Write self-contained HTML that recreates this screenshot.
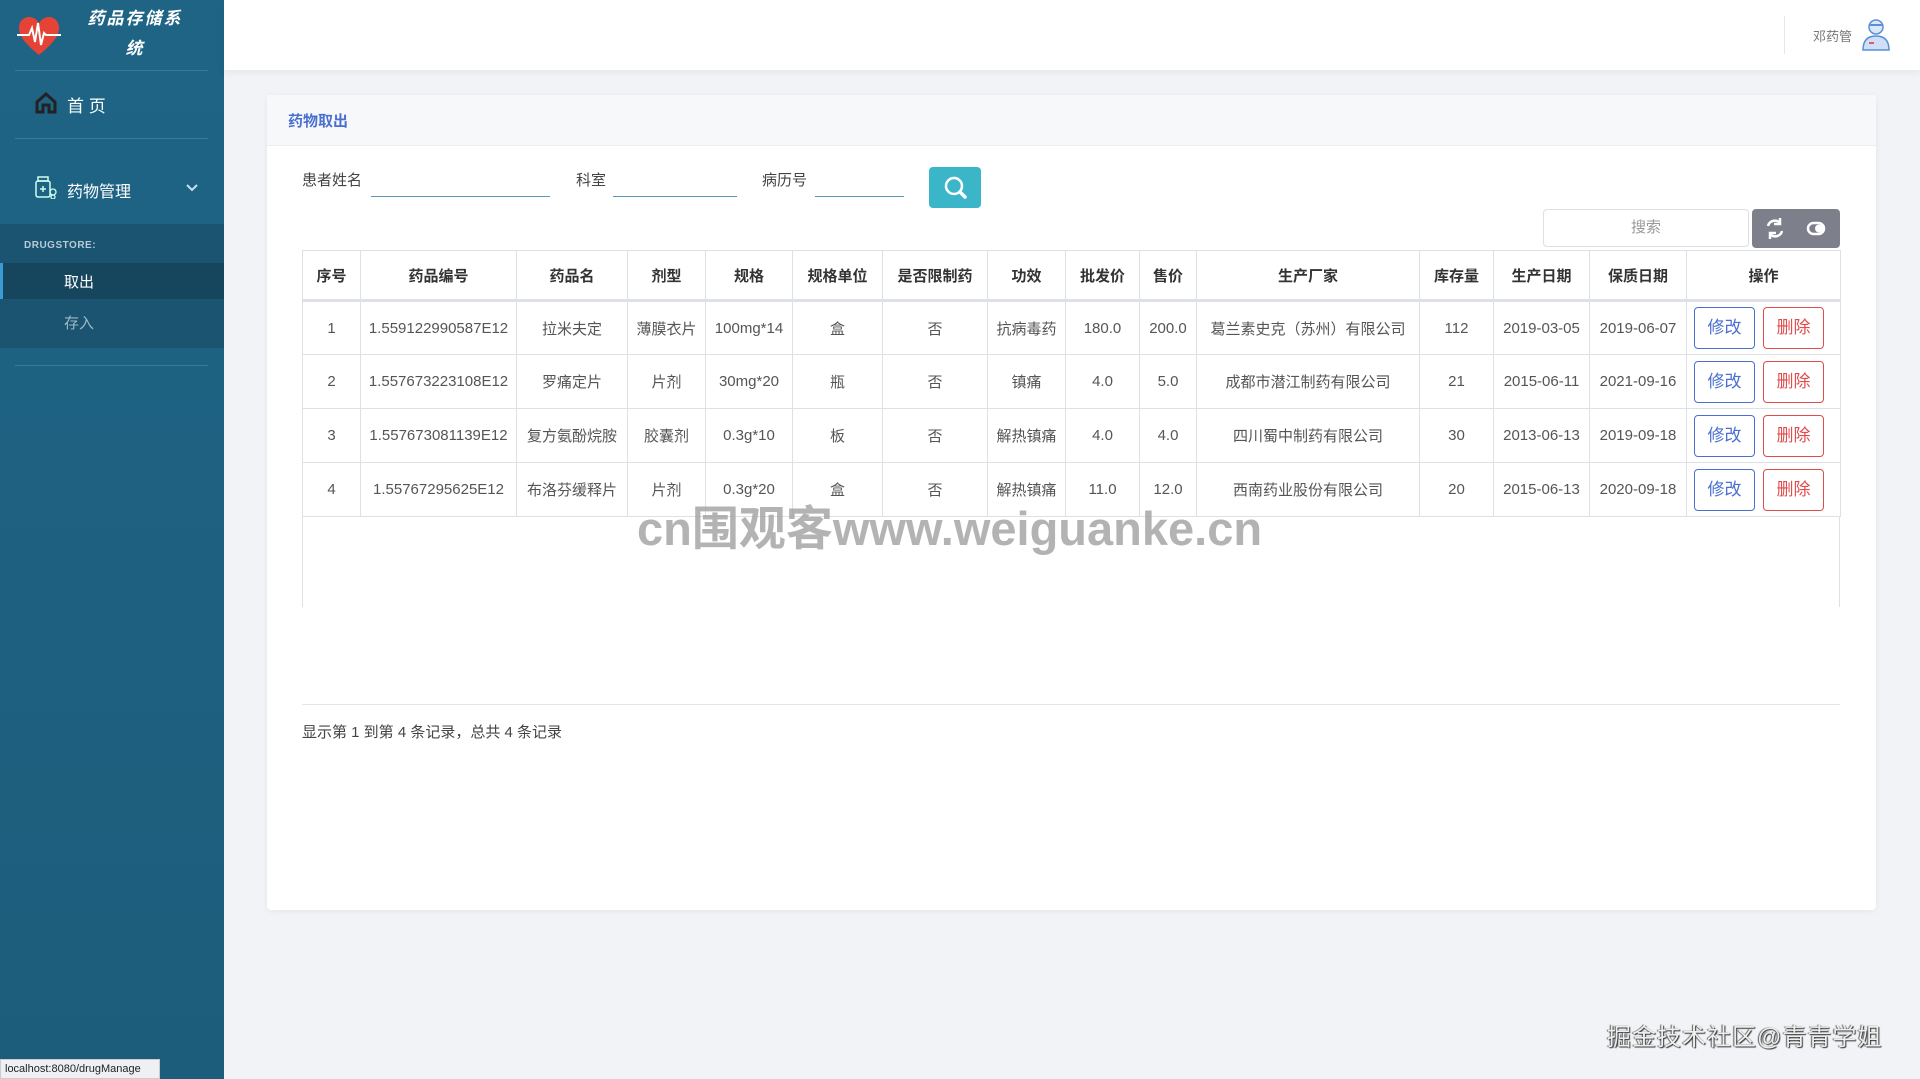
<!DOCTYPE html>
<html><head><meta charset="utf-8"><style>
*{margin:0;padding:0;box-sizing:border-box}
body{width:1920px;height:1079px;overflow:hidden;background:#f1f3f6;font-family:"Liberation Sans","Noto Sans CJK SC",sans-serif;position:relative;color:#333}
.side{position:absolute;left:0;top:0;width:224px;height:1079px;background:linear-gradient(#1f6485,#1d5d7c)}
.title{position:absolute;left:70px;top:4px;width:130px;text-align:center;color:#fff;font-weight:bold;font-style:italic;font-size:17px;line-height:30px;letter-spacing:2px}
.hr{position:absolute;left:15px;width:193px;height:1px;background:#3a7a98}
.nav{position:absolute;left:67px;color:#fff;font-size:17px}
.sub{position:absolute;left:0;top:224px;width:224px;height:124px;background:#1a5470}
.hdr{position:absolute;left:224px;top:0;width:1696px;height:70px;background:#fff;box-shadow:0 2px 8px rgba(0,0,0,.06)}
.card{position:absolute;left:267px;top:95px;width:1609px;height:815px;background:#fff;border-radius:4px;box-shadow:0 1px 6px rgba(0,0,0,.06)}
.ch{height:51px;background:#f7f8fa;border-bottom:1px solid #eceef2;padding-left:21px;line-height:54px;color:#4a6fd1;font-size:15px;font-weight:bold}
.lbl{position:absolute;top:74px;font-size:15px;color:#444}
.inp{position:absolute;top:101px;height:1px;background:#5b9ab5}
table{position:absolute;left:35px;top:155px;border-collapse:collapse;font-size:15px;color:#555;table-layout:fixed}
td,th{border:1px solid #dde0e4;text-align:center;white-space:nowrap;overflow:hidden;padding:0}
th{height:50px;font-weight:bold;color:#333;border-bottom:3px solid #dde0e4}
td{height:54px}
td.op{text-align:left;padding-left:7px}
.b{display:inline-block;width:61px;height:42px;line-height:40px;border-radius:4px;font-size:17px;border:1px solid;text-align:center;vertical-align:middle}
.e{color:#4a6fd1;border-color:#4a6fd1;margin-right:8px}
.d{color:#e04b4b;border-color:#e04b4b}
</style></head><body>
<div class="side">
<svg style="position:absolute;left:17px;top:15px" width="44" height="42" viewBox="0 0 44 42"><path d="M22 40 C10 30 2 22 2 13 C2 6 7 2 12 2 C17 2 20 5 22 8 C24 5 27 2 32 2 C37 2 42 6 42 13 C42 22 34 30 22 40Z" fill="#e44336"/><path d="M0 20 H12 L15 13 L18 27 L21 8 L24 30 L27 18 L29 20 H44" stroke="#fff" stroke-width="2" fill="none"/></svg>
<div class="title">药品存储系<br>统</div>
<div class="hr" style="top:70px"></div>
<svg style="position:absolute;left:35px;top:91px" width="22" height="23" viewBox="0 0 22 23"><path d="M2 11 L11 3 L20 11 V21 H14 V14 H8 V21 H2Z" fill="none" stroke="#222" stroke-width="3"/></svg>
<div class="nav" style="top:92px">首 页</div>
<div class="hr" style="top:138px"></div>
<svg style="position:absolute;left:34px;top:175px" width="24" height="24" viewBox="0 0 24 24"><rect x="2" y="6" width="14" height="16" rx="2" fill="none" stroke="#cfe" stroke-width="1.5"/><rect x="4" y="2" width="10" height="4" fill="none" stroke="#cfe" stroke-width="1.5"/><path d="M6 14h6M9 11v6" stroke="#cfe" stroke-width="1.5"/><circle cx="19" cy="17" r="3" fill="none" stroke="#cfe" stroke-width="1.3"/><circle cx="19" cy="22" r="2" fill="none" stroke="#cfe" stroke-width="1.3"/></svg>
<div class="nav" style="top:178px;font-size:16px">药物管理</div>
<svg style="position:absolute;left:186px;top:184px" width="12" height="8"><path d="M1 1l5 5 5-5" stroke="#cde" stroke-width="2" fill="none"/></svg>
<div class="sub">
<div style="position:absolute;left:24px;top:16px;font-size:10px;font-weight:bold;color:#b7cbd6;letter-spacing:.5px">DRUGSTORE:</div>
<div style="position:absolute;left:0;top:39px;width:224px;height:36px;background:#16455e;border-left:3px solid #3a9ad6"></div>
<div style="position:absolute;left:64px;top:47px;color:#fff;font-size:15px">取出</div>
<div style="position:absolute;left:64px;top:88px;color:#9fb9c8;font-size:15px">存入</div>
</div>
<div class="hr" style="top:365px"></div>
</div>
<div style="position:absolute;left:0;top:1059px;width:160px;height:20px;background:#eef0f3;border:1px solid #ccc;font-size:11px;line-height:18px;padding-left:4px;color:#222">localhost:8080/drugManage</div>
<div class="hdr">
<div style="position:absolute;left:1560px;top:16px;width:1px;height:38px;background:#e4e6ea"></div>
<div style="position:absolute;left:1589px;top:26px;font-size:13px;color:#777">邓药管</div>
<svg style="position:absolute;left:1637px;top:17px" width="30" height="34" viewBox="0 0 30 34"><circle cx="15" cy="10" r="7" fill="#dbe8f8" stroke="#5a8fd8" stroke-width="1.5"/><path d="M9 8h12" stroke="#5a8fd8" stroke-width="2"/><path d="M2 33 C2 22 8 19 15 19 C22 19 28 22 28 33Z" fill="#cfe0f6" stroke="#5a8fd8" stroke-width="1.5"/><path d="M8 26h5" stroke="#d33" stroke-width="1.5"/></svg>
</div>
<div class="card">
<div class="ch">药物取出</div>
<div class="lbl" style="left:35px">患者姓名</div><div class="inp" style="left:104px;width:179px"></div>
<div class="lbl" style="left:309px">科室</div><div class="inp" style="left:346px;width:124px"></div>
<div class="lbl" style="left:495px">病历号</div><div class="inp" style="left:548px;width:89px"></div>
<div style="position:absolute;left:662px;top:72px;width:52px;height:41px;background:#3bb6c8;border-radius:4px"><svg width="52" height="41" viewBox="0 0 52 41"><circle cx="25" cy="19" r="8" fill="none" stroke="#fff" stroke-width="2.5"/><path d="M31 25l5 5" stroke="#fff" stroke-width="3.5" stroke-linecap="round"/></svg></div>
<div style="position:absolute;left:1276px;top:114px;width:206px;height:38px;border:1px solid #dcdfe4;border-radius:4px;text-align:center;line-height:36px;color:#999;font-size:15px">搜索</div>
<div style="position:absolute;left:1485px;top:114px;width:88px;height:39px;background:#7d7f8b;border-radius:4px"><svg width="88" height="39" viewBox="0 0 88 39"><path d="M16 17a7 7 0 0 1 12-3M30 22a7 7 0 0 1-12 3" stroke="#fff" stroke-width="2.5" fill="none"/><path d="M28 9v6h-6M18 30v-6h6" stroke="#fff" stroke-width="2.5" fill="none"/><rect x="56" y="14" width="16" height="11" rx="5.5" fill="none" stroke="#fff" stroke-width="2.5"/><circle cx="67" cy="19.5" r="4" fill="#fff"/></svg></div>
<table>
<colgroup><col style="width:58px"><col style="width:156px"><col style="width:111px"><col style="width:78px"><col style="width:87px"><col style="width:90px"><col style="width:105px"><col style="width:78px"><col style="width:74px"><col style="width:57px"><col style="width:223px"><col style="width:74px"><col style="width:96px"><col style="width:97px"><col style="width:154px"></colgroup>
<tr><th>序号</th><th>药品编号</th><th>药品名</th><th>剂型</th><th>规格</th><th>规格单位</th><th>是否限制药</th><th>功效</th><th>批发价</th><th>售价</th><th>生产厂家</th><th>库存量</th><th>生产日期</th><th>保质日期</th><th>操作</th></tr>
<tr><td>1</td><td>1.559122990587E12</td><td>拉米夫定</td><td>薄膜衣片</td><td>100mg*14</td><td>盒</td><td>否</td><td>抗病毒药</td><td>180.0</td><td>200.0</td><td>葛兰素史克（苏州）有限公司</td><td>112</td><td>2019-03-05</td><td>2019-06-07</td><td class="op"><span class="b e">修改</span><span class="b d">删除</span></td></tr>
<tr><td>2</td><td>1.557673223108E12</td><td>罗痛定片</td><td>片剂</td><td>30mg*20</td><td>瓶</td><td>否</td><td>镇痛</td><td>4.0</td><td>5.0</td><td>成都市潜江制药有限公司</td><td>21</td><td>2015-06-11</td><td>2021-09-16</td><td class="op"><span class="b e">修改</span><span class="b d">删除</span></td></tr>
<tr><td>3</td><td>1.557673081139E12</td><td>复方氨酚烷胺</td><td>胶囊剂</td><td>0.3g*10</td><td>板</td><td>否</td><td>解热镇痛</td><td>4.0</td><td>4.0</td><td>四川蜀中制药有限公司</td><td>30</td><td>2013-06-13</td><td>2019-09-18</td><td class="op"><span class="b e">修改</span><span class="b d">删除</span></td></tr>
<tr><td>4</td><td>1.55767295625E12</td><td>布洛芬缓释片</td><td>片剂</td><td>0.3g*20</td><td>盒</td><td>否</td><td>解热镇痛</td><td>11.0</td><td>12.0</td><td>西南药业股份有限公司</td><td>20</td><td>2015-06-13</td><td>2020-09-18</td><td class="op"><span class="b e">修改</span><span class="b d">删除</span></td></tr>
</table>
<div style="position:absolute;left:35px;top:422px;width:1px;height:90px;background:#dde0e4"></div>
<div style="position:absolute;left:1572px;top:422px;width:1px;height:90px;background:#dde0e4"></div>
<div style="position:absolute;left:35px;top:609px;width:1538px;height:1px;background:#e2e4e8"></div>
<div style="position:absolute;left:35px;top:626px;font-size:15px;color:#444">显示第 1 到第 4 条记录，总共 4 条记录</div>
</div>
<div style="position:absolute;left:637px;top:490px;font-size:47px;font-weight:bold;color:rgba(160,160,160,.8);white-space:nowrap">cn围观客www.weiguanke.cn</div>
<div style="position:absolute;left:1607px;top:1017px;font-size:24px;letter-spacing:1px;color:#eee;text-shadow:1px 1px 1px #333,-1px 0 1px #555;white-space:nowrap">掘金技术社区@青青学姐</div>
</body></html>
